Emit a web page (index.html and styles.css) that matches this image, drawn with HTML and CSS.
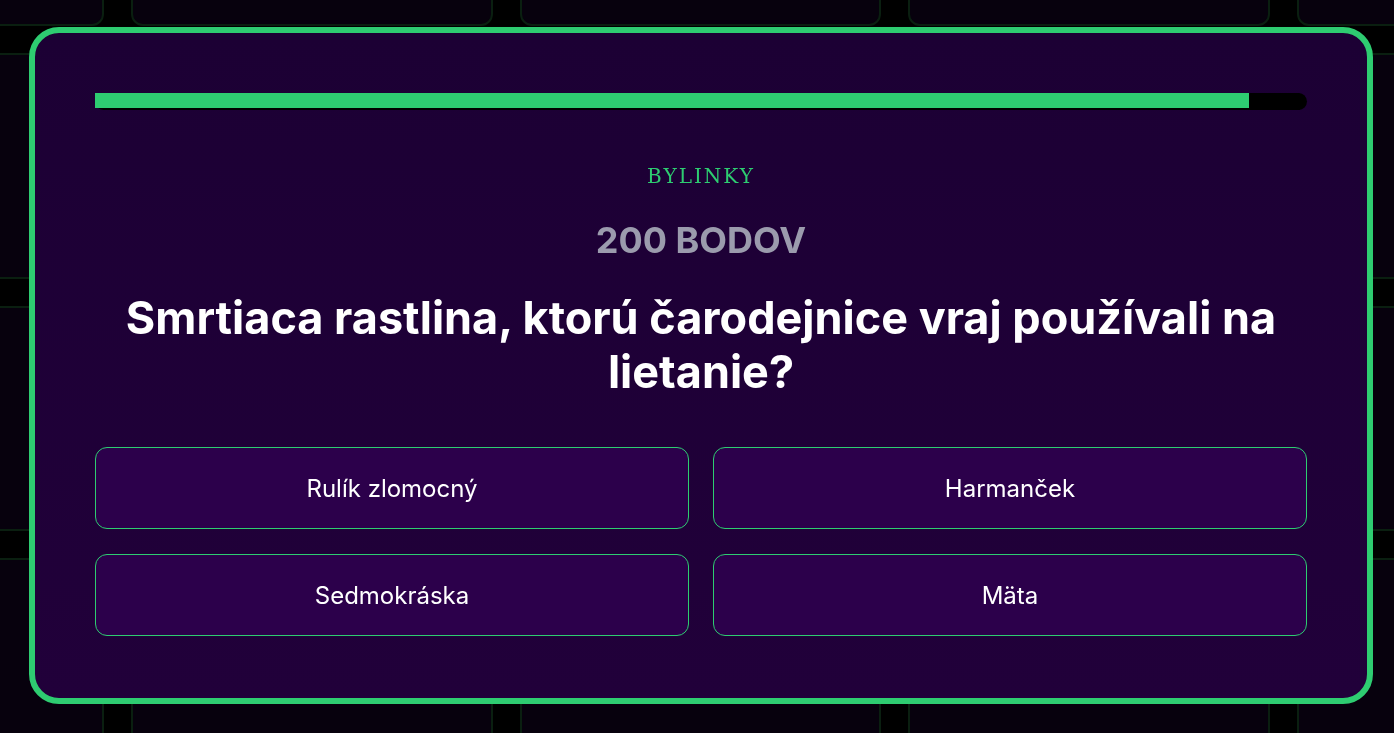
FILE: index.html
```html
<!DOCTYPE html>
<html lang="sk">
<head>
<meta charset="utf-8">
<title>Otázka</title>
<link rel="stylesheet" href="styles.css">
</head>
<body>
<div class="backdrop">
  <div class="board">
    <div class="cell"></div><div class="cell"></div><div class="cell"></div><div class="cell"></div><div class="cell"></div>
    <div class="cell"></div><div class="cell"></div><div class="cell"></div><div class="cell"></div><div class="cell"></div>
    <div class="cell"></div><div class="cell"></div><div class="cell"></div><div class="cell"></div><div class="cell"></div>
    <div class="cell"></div><div class="cell"></div><div class="cell"></div><div class="cell"></div><div class="cell"></div>
  </div>
</div>
<div class="modal">
  <div class="timer"><div class="timer-fill" style="width: 95.2%"></div></div>
  <div class="category">BYLINKY</div>
  <div class="points">200 BODOV</div>
  <h2 class="question">Smrtiaca rastlina, ktorú čarodejnice vraj používali na lietanie?</h2>
  <div class="answers">
    <button class="answer">Rulík zlomocný</button>
    <button class="answer">Harmanček</button>
    <button class="answer">Sedmokráska</button>
    <button class="answer">Mäta</button>
  </div>
</div>
</body>
</html>
```
FILE: styles.css
```css
html, body {
  margin: 0;
  padding: 0;
  background: #000;
  overflow: hidden;
  font-family: Inter, "Noto Sans", sans-serif;
}

.backdrop {
  width: 1394px;
  height: 733px;
  overflow: hidden;
}

.board {
  display: grid;
  grid-template-columns: repeat(5, 361.67px);
  grid-auto-rows: 225.5px;
  gap: 27px;
  margin-left: -257.7px;
  margin-top: -199.5px;
  width: max-content;
}

.cell {
  background: #07010d;
  border: 2px solid #0a1f10;
  border-radius: 12px;
}

.modal {
  position: fixed;
  top: 27px;
  left: 29px;
  width: 1344px;
  box-sizing: border-box;
  padding: 60px 60px 62px;
  border: 6px solid #2ecc71;
  border-radius: 30px;
  background: linear-gradient(180deg, #1c0034 0%, #21003a 100%);
  display: flex;
  flex-direction: column;
  align-items: stretch;
}

.timer {
  height: 17px;
  background: #000;
  border-radius: 9px;
}

.timer-fill {
  height: 15px;
  background: #2ecc71;
}

.category {
  margin-top: 54px;
  text-align: center;
  font-family: "DejaVu Serif", serif;
  font-size: 20px;
  letter-spacing: 2px;
  color: #2ecc71;
  line-height: 24px;
}

.points {
  margin-top: 30px;
  text-align: center;
  font-size: 36px;
  font-weight: 700;
  color: #9b9bad;
  line-height: 44px;
}

.question {
  margin: 29px 0 0;
  text-align: center;
  font-size: 45px;
  font-weight: 700;
  color: #fff;
  line-height: 54px;
}

.answers {
  margin-top: 48px;
  display: grid;
  grid-template-columns: 1fr 1fr;
  column-gap: 24px;
  row-gap: 25px;
}

.answer {
  height: 82px;
  background: #2c004b;
  border: 1px solid #2ecc71;
  border-radius: 12px;
  color: #fff;
  font-family: Inter, "Noto Sans", sans-serif;
  font-size: 24px;
  font-weight: 400;
  padding: 0;
}
```
